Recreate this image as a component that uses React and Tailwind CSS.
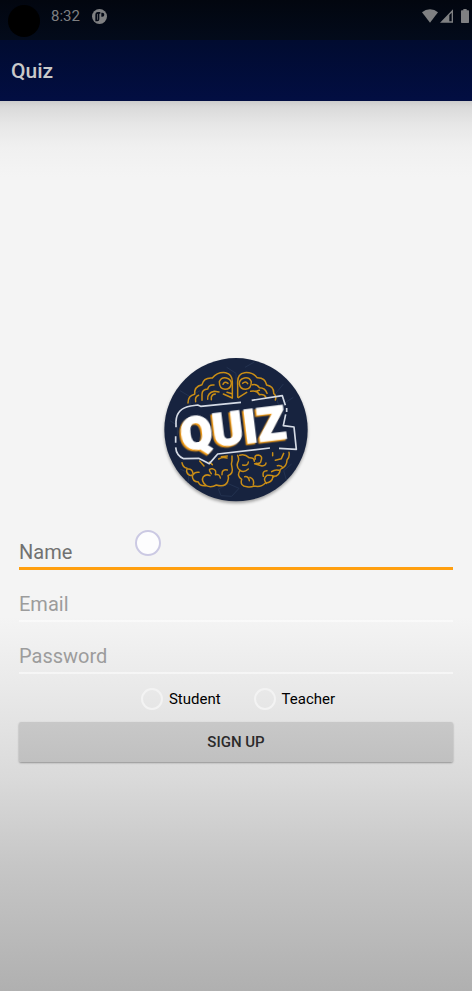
import { useState } from 'react';

function StatusBar() {
  return (
    <div className="relative h-10 bg-linear-to-b from-[#02060f] to-[#030b1b] text-[#7f8082]">
      <span className="absolute top-[5px] left-2 size-8 rounded-full bg-black" />
      <div className="flex h-8 items-center pr-[3px] pl-[51px]">
        <span className="text-[15px] leading-5">8:32</span>
        <svg className="ml-3 size-[15px]" viewBox="0 0 45 45" aria-hidden="true">
          <circle cx="22.5" cy="22.5" r="22.5" fill="currentColor" />
          <path
            d="M10 37V18q0-9 8-9h7v5h-3v17q0 6-6 6z M28 11h3q6 0 6 6t-6 6h-3z"
            fill="#040916"
          />
          <path d="M16 15h2v17h-2z" fill="currentColor" />
        </svg>
        <svg className="ml-auto h-[14px] w-4" viewBox="0 0 48 42" aria-hidden="true">
          <path d="M24 41 0 10Q10 1 24 1t24 9z" fill="currentColor" />
        </svg>
        <svg className="ml-[2px] h-[14px] w-[13px]" viewBox="0 0 39 42" aria-hidden="true">
          <path d="M0 41 39 1v40z M28 18v19h7V11z" fill="currentColor" fillRule="evenodd" />
        </svg>
        <svg className="ml-2 h-[14px] w-2" viewBox="0 0 24 42" aria-hidden="true">
          <path d="M7 0h10v4h5q2 0 2 2v34q0 2-2 2H2q-2 0-2-2V6q0-2 2-2h5z" fill="currentColor" />
        </svg>
      </div>
    </div>
  );
}

function Logo() {
  return (
    <svg
      className="size-[152px] self-center overflow-visible"
      viewBox="0 0 456 456"
      role="img"
      aria-label="Quiz"
    >
      <circle
        cx="228"
        cy="227"
        r="215"
        fill="#17233f"
        className="drop-shadow-[0_6px_5px_rgba(0,0,0,0.35)]"
      />
      <g fill="none" stroke="#233250" strokeWidth="3">
        <path d="M60 110l30 18 30-18M90 128v34M255 40l28-16M200 40l28 18v34M370 90l-24 30 10 34M400 130l-30 20v30M30 200l22 14v30M175 405l30-16 32 14-22 24-32-2zM60 345l28 12-4 28M395 330l-24 20 8 28" />
      </g>
      <g fill="none" stroke="#c98d16" strokeWidth="4.5" strokeLinecap="round" strokeLinejoin="round">
        <path d="M84 147q0-22 20-26-2-24 22-29 5-22 31-20 15-19 40-16 20 4 20 28v47" />
        <path d="M178 83q6-14 21-11 16 4 15 18-3 16-19 16-17-2-17-23M189 91q5-11 15-3" />
        <path d="M107 143q-3-15 9-19M126 139v-18q0-15 17-16 3-14 19-12M143 136q-1-20 20-24l14 2M154 137v-8q2-8 12-9M190 120l27 12M201 115l15 4" />
        <path d="M233 130V83q0-24 21-27 25-2 37 15 25-1 29 22 22 4 21 25 9 8 5 20" />
        <path d="M274 83q-6-14-21-11-16 4-15 18 3 16 19 16 17-2 17-23M263 89q-6-10-15-1" />
        <path d="M235 131l25-16M277 92q14-3 21 9 18 0 23 17M272 112q19-4 26 10 14-3 20 8M289 112l9-3" />
        <path d="M66 326q2 14 15 17-4 15 8 21 4 1 8-1-1 20 18 21 4 13 23 11 16 7 31-2 26 8 34-10 5-10 1-18 17-6 12-25-4-9 0-20v-14" />
        <path d="M83 345q14-2 16 14M99 363q5-10 18-8M138 394q-16-13-8-26 9-9 20-3M154 359q-13-16 3-15 14 3 9 18 13-3 15 10M202 348q-17-3-16 14M119 321l13 15M148 324l9 8M176 315q11-7 25-3M202 306l-18 2" />
        <path d="M233 304q6 13 0 22-5 14 7 23-11 17 5 27-6 21 16 22 10 3 21-2 21 5 34-9 21-1 23-20 19 1 22-21 20-8 20-28 9-9 6-23" />
        <path d="M240 349q12 8 25-4M254 368q12-2 14 12M270 370q14 5 10 22M239 304q15-5 28 7 16-1 16 11M248 333q16 4 17-9M286 315q-4-12 9-12 14 3 8 17 0 10-15 8M284 329l22 7q12-2 12-9M319 388q-12-14 2-24 19-2 20 5M310 367q-4-17 11-17M335 353q10-8 22-4M352 335q12-2 16 6M371 298l-7 16-18 5M338 296v9" />
      </g>
      <g fill="none" stroke="#d4dae5" strokeWidth="5" strokeLinejoin="round">
        <path d="M48 220v-18q2-39 44-46l21-3 9 4 121-12" />
        <path d="M275 139l92-14 9 29M380 162v12M377 181l-7 34 32 4 7 67-52-3M47 247v19M47 280q2 25 24 34l45-1 32 16 25-29 157-18" />
      </g>
      <text
        x="67"
        y="290"
        transform="rotate(-7 67 290)"
        fontFamily="Roboto, sans-serif"
        fontWeight="900"
        fontSize="140"
        fill="#ffffff"
        stroke="#ffffff"
        strokeWidth="4"
        className="drop-shadow-[-5px_4px_0_#f49b12]"
      >
        QUIZ
      </text>
    </svg>
  );
}

function Field({ label, type, focused, value, onChange, children }) {
  return (
    <div className="relative">
      <input
        type={type}
        aria-label={label}
        placeholder={label}
        value={value}
        onChange={onChange}
        className={`block h-13 w-full bg-transparent pt-[18px] text-[20px] leading-6 text-[#222222] outline-none ${
          focused
            ? 'border-b-3 border-[#ff9f0f] placeholder:text-[#717171]'
            : 'border-b-2 border-white/50 placeholder:text-[#9c9c9c]'
        }`}
      />
      {children}
    </div>
  );
}

function RoleOption({ label, checked, onChange }) {
  return (
    <label className="flex items-center gap-[6px] text-[15px] leading-5 text-black">
      <input
        type="radio"
        name="role"
        checked={checked}
        onChange={onChange}
        className="size-[22px] appearance-none rounded-full border-2 border-[#f3f3f3] checked:border-[6px] checked:border-[#ff9f0f]"
      />
      {label}
    </label>
  );
}

export default function App() {
  const [form, setForm] = useState({ name: '', email: '', password: '', role: '' });
  const update = (key) => (event) => setForm({ ...form, [key]: event.target.value });

  return (
    <div className="flex min-h-screen flex-col font-[Roboto,sans-serif]">
      <header>
        <StatusBar />
        <div className="flex h-[61px] items-center bg-linear-to-b from-[#010b30] to-[#020e42] px-[11px]">
          <h1 className="text-[21px] leading-7 font-medium text-[#c9c9c9]">Quiz</h1>
        </div>
      </header>
      <main className="flex flex-1 flex-col bg-[linear-gradient(to_bottom,#cccccc_0,#dadada_6px,#e7e7e7_24px,#f0f0f0_46px,#f4f4f4_76px,#f4f4f4_58%,#e9e9e9_66%,#dadada_76%,#c6c6c6_86%,#b0b0b0_100%)]">
        <form
          className="flex flex-1 flex-col justify-center px-[19px] pt-6"
          onSubmit={(event) => event.preventDefault()}
        >
          <Logo />
          <div className="mt-3">
            <Field label="Name" type="text" focused value={form.name} onChange={update('name')}>
              <span className="pointer-events-none absolute top-3 left-29 size-[26px] rounded-full border-2 border-[#cbc9e3] bg-[#fdfdfe]" />
            </Field>
            <Field label="Email" type="email" value={form.email} onChange={update('email')} />
            <Field
              label="Password"
              type="password"
              value={form.password}
              onChange={update('password')}
            />
          </div>
          <div
            className="flex h-12 items-center justify-center gap-[33px] pt-px pl-1"
            role="radiogroup"
            aria-label="Role"
          >
            {['Student', 'Teacher'].map((role) => (
              <RoleOption
                key={role}
                label={role}
                checked={form.role === role}
                onChange={() => setForm({ ...form, role })}
              />
            ))}
          </div>
          <button
            type="submit"
            className="h-10 rounded-xs bg-linear-to-b from-[#c8c8c8] to-[#c0c0c0] text-[15px] leading-5 font-medium text-[#2b2b2b] shadow-[0_1px_2px_rgba(0,0,0,0.35)]"
          >
            SIGN UP
          </button>
        </form>
      </main>
    </div>
  );
}
